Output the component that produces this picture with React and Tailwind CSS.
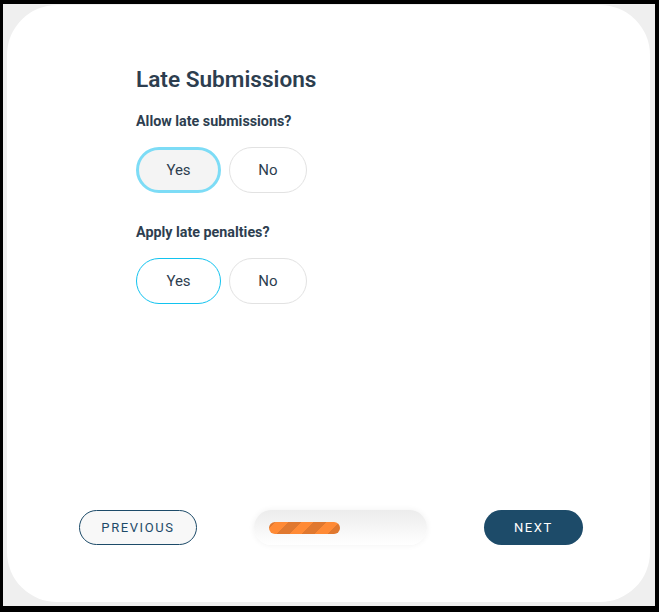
const ChoiceGroup = ({ label, selected }) => {
  return (
    <div>
      <p className="text-[14.3px] font-bold text-[#2d3e4f] leading-[20px]">{label}</p>
      <div className="mt-[16px] flex gap-[8px]">
        {selected === 'focus' ? (
          <button className="w-[85px] h-[46px] rounded-full border-[3px] border-[#7ddcf6] bg-[#f4f4f4] text-[15px] text-[#2d3e4f]">
            Yes
          </button>
        ) : (
          <button className="w-[85px] h-[46px] rounded-full border border-[#12c3ef] bg-white text-[15px] text-[#2d3e4f]">
            Yes
          </button>
        )}
        <button className="w-[78px] h-[46px] rounded-full border border-[#e2e2e2] bg-white text-[15px] text-[#2d3e4f]">
          No
        </button>
      </div>
    </div>
  );
};

const App = () => {
  return (
    <div className="w-[659px] h-[612px] border-black border-t-4 border-l-[3px] border-r-4 border-b-[6px] bg-[#efefef] pt-px pl-1 pr-[5px] pb-1 font-['Roboto',sans-serif]">
      <div className="h-full bg-white rounded-[50px] flex flex-col">
        <div className="pl-[129px] pt-[63px]">
          <h1 className="text-[22.6px] font-semibold text-[#2d3e4f] leading-[24px]">Late Submissions</h1>
          <div className="mt-[19px]">
            <ChoiceGroup label="Allow late submissions?" selected="focus" />
          </div>
          <div className="mt-[29px]">
            <ChoiceGroup label="Apply late penalties?" selected="outline" />
          </div>
        </div>
        <div className="mt-auto mb-[57px] flex items-center pl-[72px]">
          <button className="w-[118px] h-[35px] rounded-full border border-[#1d4b69] bg-[#f8f8f8] text-[13px] tracking-[1.6px] text-[#1d4b69]">
            PREVIOUS
          </button>
          <div className="ml-[57px] w-[173px] h-[35px] rounded-full bg-gradient-to-b from-[#ececec] to-white shadow-[0_0_6px_rgba(0,0,0,0.06)] flex items-center px-[15px]">
            <div className="w-[71px] h-[12px] rounded-full bg-[repeating-linear-gradient(-45deg,#e0782f_0px,#e0782f_9px,#ff8a35_9px,#ff8a35_18px)]" />
          </div>
          <button className="ml-[57px] w-[99px] h-[35px] rounded-full bg-[#1d4b69] text-[13px] tracking-[1.6px] text-white">
            NEXT
          </button>
        </div>
      </div>
    </div>
  );
};

export default App;
